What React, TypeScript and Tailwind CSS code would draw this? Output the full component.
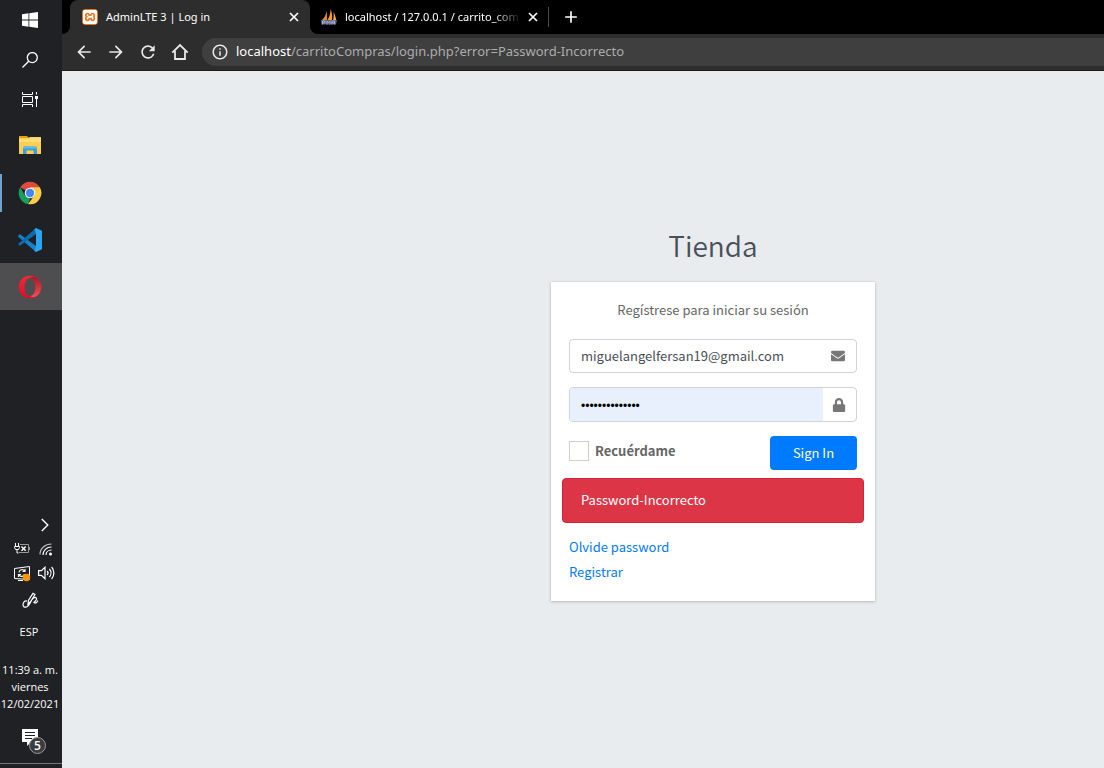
import type { ReactNode } from "react";
import { FaEnvelope, FaLock } from "react-icons/fa";
import { MdArrowBack, MdArrowForward, MdRefresh, MdInfoOutline, MdAdd } from "react-icons/md";
import { SiXampp } from "react-icons/si";

function WindowsIcon() {
  return (
    <svg width="16" height="16" viewBox="0 0 16 16" fill="#fff" aria-hidden="true">
      <path d="M0 2.2 6.5 1.3V7.5H0zM7.3 1.2 16 0v7.5H7.3zM0 8.4h6.5v6.3L0 13.8zM7.3 8.4H16V16l-8.7-1.2z" />
    </svg>
  );
}

function SearchIcon() {
  return (
    <svg width="16" height="16" viewBox="0 0 16 16" fill="none" stroke="#fff" strokeWidth="1.3" aria-hidden="true">
      <circle cx="10.3" cy="5.6" r="5" />
      <path d="M6.7 9.2.5 15.5" />
    </svg>
  );
}

function TaskViewIcon() {
  return (
    <svg width="16" height="16" viewBox="0 0 16 16" fill="none" stroke="#fff" strokeWidth="1" aria-hidden="true">
      <path d="M.5 0v2.5h10V0M.5 15v-2.5h10V15M.5 4.500h10v6H.5zM14.500 0v2.500M14.500 7v8" />
      <path d="M13 4h3v3h-3z" fill="#fff" stroke="none" />
    </svg>
  );
}

function FolderIcon() {
  return (
    <svg width="22" height="19" viewBox="0 0 22 19" aria-hidden="true">
      <path d="M0 0h8l2 2H0z" fill="#e8a202" />
      <path d="M0 2h9l2-1h11v17H0z" fill="#fccf53" />
      <path d="M0 3h9l2-1h11v4H0z" fill="#ffdc78" />
      <path d="M5 10.5h12l1 2V18h-3.500v-3.500h-7V18H4v-5.500z" fill="#3e9ddc" />
      <path d="M5 10.500h12l1 2H4z" fill="#68b8ea" />
    </svg>
  );
}

function ChromeIcon() {
  return (
    <svg width="24" height="24" viewBox="0 0 24 24" aria-hidden="true">
      <path d="M12 12 2.200 6.300A11.300 11.300 0 0 1 21.800 6.300z" fill="#dd4b3e" />
      <path d="M2.200 6.300 7.200 15 12 18l-2 5.100A11.300 11.300 0 0 1 2.200 6.300z" fill="#1a9e5c" />
      <path d="M21.800 6.300A11.300 11.300 0 0 1 10 23.100L16.800 14 12 6.300z" fill="#ffcd46" />
      <circle cx="12" cy="12" r="5.300" fill="#f4f4f4" />
      <circle cx="12" cy="12" r="4.200" fill="#4687f4" />
    </svg>
  );
}

function CodeIcon() {
  return (
    <svg width="24" height="24" viewBox="0 0 24 24" aria-hidden="true">
      <path d="M0 8 2 6.200 18 18v6L.2 8.800z" fill="#1483cc" />
      <path d="M0 16 18 0v6L2 17.800z" fill="#0b6cb0" />
      <path d="m18 0 6 2.800v18.400L18 24l-1.500-1 1.500-5V6l-1.500-5z" fill="#2aa5ee" />
    </svg>
  );
}

function OperaIcon() {
  return (
    <svg width="24" height="24" viewBox="0 0 24 24" aria-hidden="true">
      <defs>
        <linearGradient id="opera" x1="0" y1="0" x2="0" y2="1">
          <stop offset="0" stopColor="#ff2438" />
          <stop offset="1" stopColor="#d80f26" />
        </linearGradient>
        <linearGradient id="opera-side" x1="0" y1="0" x2="0" y2="1">
          <stop offset="0" stopColor="#b01423" />
          <stop offset="1" stopColor="#f0505a" />
        </linearGradient>
      </defs>
      <path fillRule="evenodd" fill="url(#opera)" d="M12 .8a11.200 11.200 0 1 1 0 22.400A11.200 11.200 0 0 1 12 .8zm0 2.200c-3.200 0-5.500 4-5.500 9s2.300 9 5.500 9 5.500-4 5.500-9S15.200 3 12 3z" />
      <path fill="url(#opera-side)" d="M12 3c2-1.700 5-1.400 7.200.3A11.200 11.200 0 0 1 19.200 20.700c-2.200 1.700-5.200 2-7.200.3 3.200 0 5.500-4 5.500-9S15.200 3 12 3z" />
    </svg>
  );
}

function ChevronIcon() {
  return (
    <svg width="8" height="14" viewBox="0 0 8 14" fill="none" stroke="#fff" strokeWidth="1.400" aria-hidden="true">
      <path d="m.8 1 6 6-6 6" />
    </svg>
  );
}

function BatteryIcon() {
  return (
    <svg width="17" height="14" viewBox="0 0 17 14" fill="none" stroke="#fff" aria-hidden="true">
      <path d="M6 2.500h8.500v8H5M15.500 5v3" stroke="#999" />
      <path d="M1.500 1v3M4.500 1v3M.5 4.500h5v1l-1 2h-3l-1-2zM3 7.500v3.500h1.500" />
      <path d="m7.500 4.500 4.200 4.200m0-4.200L7.500 8.700" strokeWidth="1.400" />
    </svg>
  );
}

function WifiIcon() {
  return (
    <svg width="14" height="14" viewBox="0 0 14 14" fill="none" stroke="#fff" strokeWidth="1.200" aria-hidden="true">
      <path d="M1 12.500C1 6.500 6 2 12.500 2" stroke="#bbb" />
      <path d="M4 13c0-4.500 3.500-8 8.500-8M7 13c0-3 2.500-5 5.500-5" />
      <circle cx="11.500" cy="12" r="1.500" fill="#fff" stroke="none" />
    </svg>
  );
}

function UpdateIcon() {
  return (
    <svg width="17" height="17" viewBox="0 0 17 17" fill="none" stroke="#fff" aria-hidden="true">
      <path d="M.5 3.500 15.500 1.500v13l-15-1zM4 15.500h5" />
      <path d="M5 7.500a3 3 0 0 1 5.500-1.500M11 4v2.500H8.500M10.500 9A3 3 0 0 1 5 10M4.500 12V9.500H7" strokeWidth="1.200" />
      <circle cx="12.500" cy="12.500" r="3.700" fill="#ff9500" stroke="none" />
    </svg>
  );
}

function SpeakerIcon() {
  return (
    <svg width="17" height="14" viewBox="0 0 17 14" fill="none" stroke="#fff" strokeWidth="1.200" aria-hidden="true">
      <path d="M.6 4.600h2.800L7 1.200v11.600L3.400 9.400H.6z" />
      <path d="M9.200 5a3 3 0 0 1 0 4M11.400 3a6 6 0 0 1 0 8M13.600 1a9 9 0 0 1 0 12" />
    </svg>
  );
}

function PenIcon() {
  return (
    <svg width="17" height="17" viewBox="0 0 17 17" fill="none" stroke="#fff" strokeWidth="1.200" aria-hidden="true">
      <path d="m6 12 .5-3.800L11 1.300l2 1.200-4.500 7.300zM5 9C2.500 8.500 1 10.700 1 12.800s1.600 2.700 3.500 2.200c4-1.500 3.500-6.500 7-9 2.500-1.500 4 .3 2.500 2.200L12 10.500c1.500 1 3.500 0 3.700-2" />
    </svg>
  );
}

function NotificationIcon() {
  return (
    <svg width="24" height="26" viewBox="0 0 24 26" aria-hidden="true">
      <path d="M0 0h16v13H9l-4 4v-4H0z" fill="#fff" />
      <path d="M3 3.500h10M3 6.500h10M3 9.500h7" stroke="#202124" />
      <circle cx="15.500" cy="16.500" r="8" fill="#3c3c3e" stroke="#99999b" />
      <text x="15.500" y="20.500" textAnchor="middle" fontSize="12" fontWeight="600" fill="#fff" fontFamily="Open Sans, sans-serif">5</text>
    </svg>
  );
}

function SailIcon() {
  return (
    <svg width="16" height="16" viewBox="0 0 16 16" aria-hidden="true">
      <path d="M6 2v9H1C3 9 5 6 6 2z" fill="#d98a35" />
      <path d="M9.500 0c1.500 3.500 2 7 1.500 11H6.500C8.500 8 9.500 4 9.500 0z" fill="#f99a1f" />
      <path d="M12.500 3c1.300 2 2.200 5 2.700 8h-3c.6-3 .6-5.500.3-8z" fill="#f4a94a" />
      <path d="M0 11h16l-1 4.500H.5z" fill="#5d638a" />
      <path d="M1.500 15.500v-3.500h2.500v2H1.500M6 15.500V12l1.500 1.700L9 12v3.500m2 0V12h2.500v3.500M11 14h2.500" stroke="#b9bddb" strokeWidth=".8" fill="none" />
    </svg>
  );
}

function CloseIcon() {
  return (
    <svg width="14" height="14" viewBox="0 0 14 14" fill="none" stroke="#fff" strokeWidth="1.700" aria-hidden="true">
      <path d="m3 3 8 8m0-8-8 8" />
    </svg>
  );
}

function HomeIcon() {
  return (
    <svg width="18" height="18" viewBox="0 0 18 18" fill="none" stroke="#e8e8e8" strokeWidth="1.800" aria-hidden="true">
      <path d="M1.300 9.700 9 2l7.700 7.700M4 8v8h10V8" />
    </svg>
  );
}

function TaskButton({ label, children, active, running }: { label: string; children: ReactNode; active?: boolean; running?: boolean }) {
  return (
    <button
      type="button"
      aria-label={label}
      className={`relative flex h-[47px] w-full items-center justify-center pr-0.5 ${active ? "bg-[#4e4e50]" : ""}`}
    >
      {running && <span className="absolute left-0 h-[38px] w-0.5 bg-[#6fa3cf]" />}
      {children}
    </button>
  );
}

function Taskbar() {
  const top = "flex h-10 w-full items-center justify-center pr-0.5";
  return (
    <aside className="flex w-[62px] shrink-0 flex-col justify-between bg-[#202124] font-['Open_Sans',sans-serif] text-[11px] leading-[17px] text-white">
      <nav aria-label="Barra de tareas">
        <button type="button" aria-label="Inicio" className={top}><WindowsIcon /></button>
        <button type="button" aria-label="Buscar" className={top}><SearchIcon /></button>
        <button type="button" aria-label="Vista de tareas" className={top}><TaskViewIcon /></button>
        <div className="pt-0.5">
          <TaskButton label="Explorador de archivos"><FolderIcon /></TaskButton>
          <TaskButton label="Chrome" running><ChromeIcon /></TaskButton>
          <TaskButton label="Visual Studio Code"><CodeIcon /></TaskButton>
          <TaskButton label="Opera" active><OperaIcon /></TaskButton>
        </div>
      </nav>
      <div>
        <button type="button" aria-label="Mostrar iconos ocultos" className="flex h-6 w-full items-center justify-end pr-[13px]"><ChevronIcon /></button>
        <div className="grid grid-cols-2 pr-1 pl-2.5">
          <span className="flex h-6 items-center justify-center"><BatteryIcon /></span>
          <span className="flex h-6 items-center justify-center"><WifiIcon /></span>
          <span className="flex h-6 items-center justify-center"><UpdateIcon /></span>
          <span className="flex h-6 items-center justify-center"><SpeakerIcon /></span>
        </div>
        <div className="flex h-[30px] items-center justify-center pr-0.5"><PenIcon /></div>
        <div className="flex h-8 items-center justify-center pr-1">ESP</div>
        <div className="whitespace-nowrap pt-[14px] pr-0.5 text-center">
          <div>11:39 a. m.</div>
          <div>viernes</div>
          <div className="flex justify-center">12/02/2021</div>
        </div>
        <button type="button" aria-label="Notificaciones" className="flex h-[51px] w-full items-center justify-center pt-2 pl-1.5"><NotificationIcon /></button>
        <div className="h-[5px] border-t border-[#77777a]" />
      </div>
    </aside>
  );
}

function BrowserBar() {
  const nav = "flex size-8 items-center justify-center text-[#e8e8e8]";
  return (
    <header className="shrink-0 border-b border-[#1c1c1e] bg-[#2d2d2e] font-['Noto_Sans',sans-serif] text-white">
      <div className="flex h-[34px] bg-[#2d2d2e]">
        <div className="w-2 rounded-br-lg bg-black" />
        <div className="bg-black">
          <div className="flex h-full w-60 items-center rounded-t-lg bg-[#2d2d2e] pr-[9px] pl-3">
            <span className="flex size-4 items-center justify-center rounded-sm bg-[#ec7426]"><SiXampp size={14} /></span>
            <span className="flex-1 pl-2 text-[11px]">AdminLTE 3 | Log in</span>
            <button type="button" aria-label="Cerrar AdminLTE 3"><CloseIcon /></button>
          </div>
        </div>
        <div className="flex flex-1 items-center rounded-bl-lg bg-black pl-[11px]">
          <SailIcon />
          <span className="w-[184px] overflow-hidden pl-2 text-[11px] whitespace-nowrap [mask-image:linear-gradient(to_right,black_85%,transparent)]">
            localhost / 127.0.0.1 / carrito_com
          </span>
          <span className="w-[5px]" />
          <button type="button" aria-label="Cerrar localhost"><CloseIcon /></button>
          <span className="mx-2 h-5 w-px bg-[#4a4a4a]" />
          <button type="button" aria-label="Nueva pestaña" className="pl-1"><MdAdd size={20} /></button>
        </div>
      </div>
      <div className="flex h-9 items-center pl-1.5">
        <button type="button" aria-label="Atrás" className={nav}><MdArrowBack size={20} /></button>
        <button type="button" aria-label="Adelante" className={nav}><MdArrowForward size={20} /></button>
        <button type="button" aria-label="Recargar" className={nav}><MdRefresh size={20} /></button>
        <button type="button" aria-label="Página principal" className={nav}><HomeIcon /></button>
        <div className="ml-1.5 flex h-7 flex-1 items-center rounded-l-full bg-[#3f3f40] pl-[9px]">
          <MdInfoOutline size={18} color="#e8e8e8" />
          <span className="pl-[7px] text-[13px] text-[#acacad]">
            <span className="text-white">localhost</span>/carritoCompras/login.php?error=Password-Incorrecto
          </span>
        </div>
      </div>
    </header>
  );
}

function LoginCard() {
  return (
    <div className="w-[324px] font-['Noto_Sans_CJK_SC',sans-serif] text-[13px] leading-[25px]">
      <h1 className="pb-4 text-center text-[28px] leading-[42px] font-[350] text-[#495057]">Tienda</h1>
      <form
        className="bg-white px-[18px] pt-[18px] pb-[17px] shadow-[0_0_1px_rgba(0,0,0,0.125),0_1px_3px_rgba(0,0,0,0.2)]"
        onSubmit={(e) => e.preventDefault()}
      >
        <p className="pb-5 text-center leading-[19px] text-[#666]">Regístrese para iniciar su sesión</p>
        <div className="mb-3.5 flex h-[34px] overflow-hidden rounded border border-[#ced4da]">
          <input type="email" aria-label="Email" defaultValue="miguelangelfersan19@gmail.com" className="min-w-0 flex-1 pb-0.5 pl-[11px] text-[#495057] outline-none" />
          <span className="flex w-9 items-center justify-center text-[#777]"><FaEnvelope size={14} /></span>
        </div>
        <div className="mb-3.5 flex h-[35px] overflow-hidden rounded border border-[#ced4da]">
          <input type="password" aria-label="Password" defaultValue="contrasena1234" className="min-w-0 flex-1 bg-[#e8f0fe] pt-1 pl-[11px] font-['Liberation_Sans',sans-serif] text-[12px] text-black outline-none" />
          <span className="flex w-[33px] items-center justify-center pr-0.5 text-[#777]"><FaLock size={14} /></span>
        </div>
        <div className="flex justify-between">
          <label className="flex h-[29px] items-center gap-1.5 font-bold text-[#666]">
            <input type="checkbox" className="size-5 appearance-none border border-[#d3cfc8] bg-white" />
            Recuérdame
          </label>
          <button type="submit" className="h-[34px] w-[87px] rounded bg-[#007bff] pb-0.5 text-white">Sign In</button>
        </div>
        <div role="alert" className="-mx-[7px] mt-2 mb-[11px] flex h-[45px] items-center rounded border border-[#d32535] bg-[#dc3545] pb-0.5 pl-[18px] text-white">
          Password-Incorrecto
        </div>
        <p><a href="#olvide" className="text-[#007bff]">Olvide password</a></p>
        <p><a href="#registrar" className="text-[#007bff]">Registrar</a></p>
      </form>
    </div>
  );
}

export default function App() {
  return (
    <div className="flex min-h-screen overflow-hidden bg-[#e9ecef]">
      <Taskbar />
      <div className="flex min-w-0 flex-1 flex-col">
        <BrowserBar />
        <main className="flex justify-center pt-[153px] pl-[260px]">
          <LoginCard />
        </main>
      </div>
    </div>
  );
}
